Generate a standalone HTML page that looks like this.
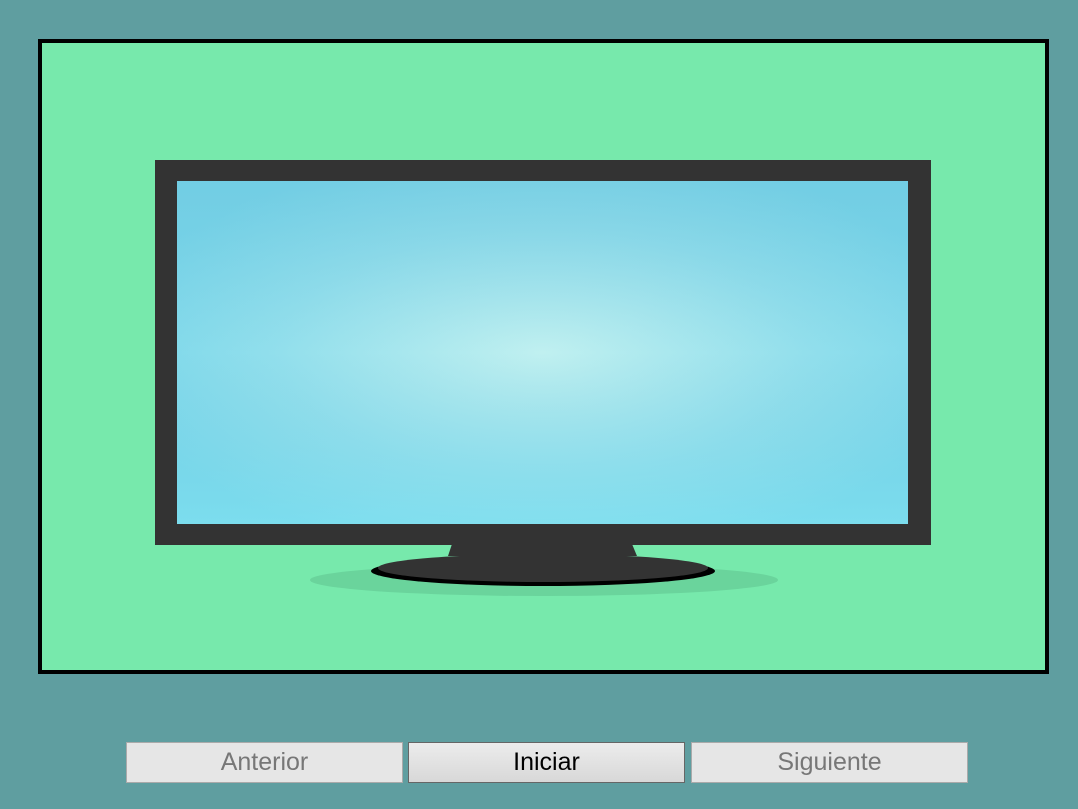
<!DOCTYPE html>
<html><head><style>
body{margin:0;width:1078px;height:809px;background:#5f9ea0;position:relative;overflow:hidden;font-family:"Liberation Sans",sans-serif}
.box{position:absolute;left:38px;top:39px;width:1003px;height:627px;border:4px solid #000;background:#77e9ac}
.btn{position:absolute;top:742px;height:39px;border:1px solid #aaa;background:#e6e6e6;color:#777;font-size:25px;line-height:39px;text-align:center}
</style></head><body>
<div class="box"></div>
<svg style="position:absolute;left:0;top:0" width="1078" height="809">
<defs><radialGradient id="g" cx="0.5" cy="0.5" r="0.6">
<stop offset="0" stop-color="#c0f0f0"/><stop offset="0.6" stop-color="#92dfec"/><stop offset="1" stop-color="#7ad7ea"/></radialGradient>
<linearGradient id="v" x1="0" y1="0" x2="0" y2="1"><stop offset="0" stop-color="#5ab0d0" stop-opacity="0.25"/><stop offset="0.5" stop-color="#5ab0d0" stop-opacity="0"/><stop offset="1" stop-color="#80ecf8" stop-opacity="0.3"/></linearGradient></defs>
<ellipse cx="544" cy="580" rx="234" ry="16" fill="#6ad49c"/>
<rect x="155" y="160" width="776" height="385" fill="#333"/>
<rect x="177" y="181" width="731" height="343" fill="url(#g)"/>
<rect x="177" y="181" width="731" height="343" fill="url(#v)"/>
<ellipse cx="543" cy="571" rx="172" ry="15" fill="#000"/>
<ellipse cx="543" cy="568" rx="165" ry="14" fill="#333"/>
<polygon points="452,544 632,544 637,556 448,556" fill="#333"/>
</svg>
<div class="btn" style="left:126px;width:275px">Anterior</div>
<div class="btn" style="left:408px;width:275px;border-color:#666;color:#000;background:linear-gradient(#ececec,#d8d8d8)">Iniciar</div>
<div class="btn" style="left:691px;width:275px">Siguiente</div>
</body></html>
